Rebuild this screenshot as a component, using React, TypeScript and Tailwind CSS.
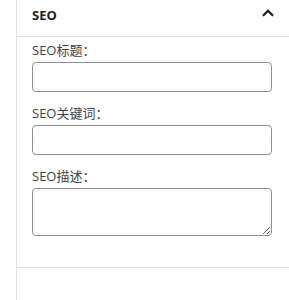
import React from 'react';

const fields = [
  { label: 'SEO标题：', multiline: false },
  { label: 'SEO关键词：', multiline: false },
  { label: 'SEO描述：', multiline: true },
];

export default function App() {
  return (
    <div
      className="w-[289px] h-[300px] bg-white pl-4 overflow-hidden"
      style={{ fontFamily: '"Open Sans", "Noto Sans CJK SC", sans-serif' }}
    >
      <div className="h-full border-l border-[#e0e0e0] flex flex-col">
        {/* Panel header */}
        <div className="h-[37px] border-b border-[#e0e0e0] flex items-start justify-between pl-[15px] pr-[15px] pt-[6px]">
          <span className="text-[13px] leading-[18px] font-bold text-[#1e1e1e]">SEO</span>
          <svg width="12" height="8" viewBox="0 0 12 8" className="mt-[3px]" fill="none">
            <path d="M1 6.8 L6 1.8 L11 6.8" stroke="#1e1e1e" strokeWidth="2.2" />
          </svg>
        </div>

        {/* Fields */}
        <div className="pl-[15px] pr-[17px] pt-[4px] pb-[31px] flex flex-col gap-[12px] border-b border-[#e0e0e0]">
          {fields.map((f) => (
            <div key={f.label} className="flex flex-col">
              <label className="text-[13px] leading-[18px] text-[#3c434a] mb-[3px]">{f.label}</label>
              {f.multiline ? (
                <textarea className="w-full h-[48px] rounded-[4px] border border-[#8c8f94] bg-white px-2 py-1 text-[13px] outline-none" />
              ) : (
                <input className="w-full h-[30px] rounded-[4px] border border-[#8c8f94] bg-white px-2 text-[13px] outline-none" />
              )}
            </div>
          ))}
        </div>
      </div>
    </div>
  );
}
